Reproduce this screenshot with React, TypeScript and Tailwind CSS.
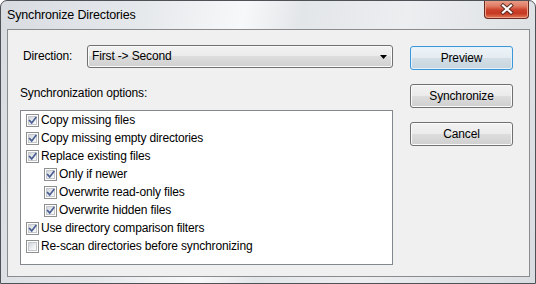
const options = [
  { label: "Copy missing files", checked: true, indent: false },
  { label: "Copy missing empty directories", checked: true, indent: false },
  { label: "Replace existing files", checked: true, indent: false },
  { label: "Only if newer", checked: true, indent: true },
  { label: "Overwrite read-only files", checked: true, indent: true },
  { label: "Overwrite hidden files", checked: true, indent: true },
  { label: "Use directory comparison filters", checked: true, indent: false },
  { label: "Re-scan directories before synchronizing", checked: false, indent: false },
]

function CheckBox({ checked }: { checked: boolean }) {
  return (
    <div className="w-[13px] h-[13px] shrink-0 border border-[#8e8f8f] bg-white p-[1px]">
      <div className="relative w-full h-full border border-[#c4c7cc] bg-[linear-gradient(135deg,#d0d4da_0%,#eef0f2_60%,#fafafa_100%)]">
        {checked && (
          <svg viewBox="0 0 9 9" className="absolute inset-0 w-[9px] h-[9px] -translate-x-[1px] -translate-y-[1px]">
            <path d="M1.6 4.6 L3.7 6.9 L7.8 1.6" fill="none" stroke="#4a5f92" strokeWidth="1.7" strokeLinecap="square" />
          </svg>
        )}
      </div>
    </div>
  )
}

function Button({ label, focused }: { label: string; focused?: boolean }) {
  return (
    <button
      className={
        focused
          ? "w-[103px] h-[24px] rounded-[3px] border border-[#3c97d8] shadow-[inset_0_0_0_1px_#e6f2fa] bg-[linear-gradient(180deg,#eef4f8_0%,#e4ecf1_49%,#d3dee6_50%,#c8d5de_100%)] text-[12px] tracking-[-0.15px] text-black leading-none"
          : "w-[103px] h-[24px] rounded-[3px] border border-[#707070] shadow-[inset_0_0_0_1px_#fbfbfb] bg-[linear-gradient(180deg,#f2f2f2_0%,#ebebeb_49%,#dddddd_50%,#cfcfcf_100%)] text-[12px] tracking-[-0.15px] text-black leading-none"
      }
    >
      {label}
    </button>
  )
}

export default function App() {
  return (
    <div
      className="w-[536px] h-[284px] flex flex-col border border-[#4e5256] rounded-t-[7px] overflow-hidden bg-[linear-gradient(100deg,#d8dce1_0%,#e6e9ec_25%,#f7f8f9_42%,#e3e6e9_52%,#eceef0_70%,#d9dde1_100%)] text-black tracking-[-0.15px]"
      style={{ fontFamily: '"Liberation Sans", Arial, sans-serif' }}
    >
      {/* Title bar */}
      <div className="h-[28px] shrink-0 flex items-start justify-between">
        <span className="pl-[6px] pt-[7px] text-[12.5px] leading-[15px]">Synchronize Directories</span>
        <div className="mr-[6px] -mt-[1px] w-[45px] h-[19px] rounded-b-[4px] border border-t-0 border-[#6b2a20] shadow-[inset_0_0_0_1px_#eda08a] bg-[linear-gradient(180deg,#eaa38f_0%,#e07a62_35%,#cc412b_55%,#c63a24_75%,#e27a56_100%)] flex items-center justify-center">
          <svg viewBox="0 0 14 12" className="w-[14px] h-[12px]">
            <path d="M3 2.5 L11 9.5 M11 2.5 L3 9.5" stroke="#5a2a22" strokeWidth="4" strokeLinecap="square" />
            <path d="M3 2.5 L11 9.5 M11 2.5 L3 9.5" stroke="#ffffff" strokeWidth="2.2" strokeLinecap="square" />
          </svg>
        </div>
      </div>

      {/* Client area */}
      <div className="flex-1 ml-[6px] mr-[5px] mb-[6px] border border-[#8a8b8c] bg-[#f0f0f0] flex gap-[17px] pl-[12px]">
        <div className="w-[373px] flex flex-col">
          <div className="mt-[15px] flex items-center">
            <span className="w-[67px] pl-[3px] text-[12px] leading-[15px]">Direction:</span>
            <div className="w-[306px] h-[23px] rounded-[3px] border border-[#707070] shadow-[inset_0_0_0_1px_#fbfbfb] bg-[linear-gradient(180deg,#f2f2f2_0%,#ebebeb_49%,#dddddd_50%,#cfcfcf_100%)] flex items-center justify-between pl-[4px] pr-[5px]">
              <span className="text-[12px] leading-[15px]">First -&gt; Second</span>
              <svg viewBox="0 0 7 4" className="w-[7px] h-[4px]">
                <path d="M0 0 H7 L3.5 4 Z" fill="#000" />
              </svg>
            </div>
          </div>
          <span className="mt-[18px] text-[12px] leading-[15px]">Synchronization options:</span>
          <div className="mt-[9px] h-[155px] border border-[#828790] bg-white pl-[5px] pt-[1px] flex flex-col">
            {options.map((o) => (
              <div key={o.label} className={"h-[17.9px] flex items-center gap-[2px] " + (o.indent ? "pl-[18px]" : "")}>
                <CheckBox checked={o.checked} />
                <span className="text-[12px] leading-[15px]">{o.label}</span>
              </div>
            ))}
          </div>
        </div>

        <div className="pt-[16px] flex flex-col gap-[14px]">
          <Button label="Preview" focused />
          <Button label="Synchronize" />
          <Button label="Cancel" />
        </div>
      </div>
    </div>
  )
}
